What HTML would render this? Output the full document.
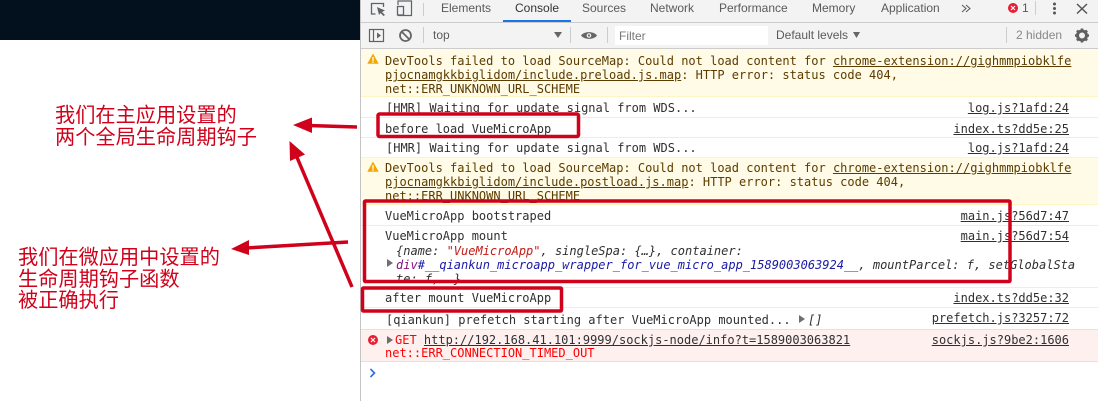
<!DOCTYPE html>
<html>
<head>
<meta charset="utf-8">
<style>
html,body{margin:0;padding:0;background:#fff}
#p{position:relative;width:1098px;height:401px;overflow:hidden;background:#fff}
.a{position:absolute}
.t{position:absolute;white-space:pre;font:12px/14px "DejaVu Sans Mono",monospace;color:#303030}
.w{color:#5c3c00}
.e{color:#f00}
.u{text-decoration:underline}
.s{position:absolute;white-space:pre;font:12px/14px "DejaVu Sans Mono",monospace;color:#303030;text-decoration:underline;right:29px}
.b{position:absolute;white-space:pre;font:12px/14px "Liberation Sans",sans-serif;color:#5a5a5a}
.i{font-style:italic}
.c{position:absolute;white-space:pre;font:20.2px/22px "Liberation Sans","Noto Sans CJK SC",sans-serif;color:#d0021b}
.l{position:absolute;left:361px;right:0;height:1px;background:#ececec}
</style>
</head>
<body>
<div id="p">
<div class="a" style="left:0;top:0;width:360px;height:40px;background:#03111f"></div>
<div class="a" style="left:360px;top:0;width:1px;height:401px;background:#c4c4c4"></div>

<div class="a" style="left:361px;top:0;right:0;height:22px;background:#f3f3f3"></div>
<div class="a" style="left:361px;top:22px;right:0;height:1px;background:#ccc"></div>
<div class="a" style="left:361px;top:23px;right:0;height:25px;background:#f3f3f3"></div>
<div class="a" style="left:361px;top:48px;right:0;height:1px;background:#ccc"></div>

<svg class="a" style="left:361px;top:0" width="737" height="48" viewBox="361 0 737 48" fill="none">
<path d="M375.500 14H371.500V3.500H383.500V7" stroke="#5f6368" stroke-width="1.300"/>
<path d="M377 7L385 10.500L382 12L385 15L383.500 16L380.500 13L379 15Z" fill="#5f6368"/>
<path d="M398 5V1H411.500V15.500H398" stroke="#5f6368" stroke-width="1.200"/>
<rect x="397.500" y="6.500" width="6" height="8.500" stroke="#5f6368" stroke-width="1.300"/>
<line x1="423.500" y1="3" x2="423.500" y2="16" stroke="#ccc"/>
<rect x="369.500" y="29.500" width="14" height="12" stroke="#5f6368" stroke-width="1.200"/>
<line x1="373.500" y1="29" x2="373.500" y2="42" stroke="#5f6368" stroke-width="1.200"/>
<path d="M377 32.500L381 35.500L377 38.500Z" fill="#5f6368"/>
<circle cx="405.500" cy="35.500" r="5.500" stroke="#666" stroke-width="1.800"/>
<line x1="401.500" y1="31.500" x2="409.500" y2="39.500" stroke="#666" stroke-width="1.800"/>
<line x1="423.500" y1="27" x2="423.500" y2="43" stroke="#ccc"/>
<line x1="570.500" y1="27" x2="570.500" y2="43" stroke="#ccc"/>
<line x1="607.500" y1="27" x2="607.500" y2="43" stroke="#ccc"/>
<line x1="1006.500" y1="27" x2="1006.500" y2="43" stroke="#ccc"/>
<path d="M554 32H562L558 38Z" fill="#666"/>
<path d="M581 35.500C584 31 594 31 597 35.500C594 40 584 40 581 35.500Z" fill="#666"/>
<circle cx="589" cy="35.500" r="2.300" fill="#f3f3f3"/>
<circle cx="589" cy="35.500" r="1.100" fill="#666"/>
<path d="M962 5L966 8.500L962 12M966 5L970 8.500L966 12" stroke="#555" stroke-width="1"/>
<circle cx="1013" cy="8" r="5" fill="#e81c33"/>
<path d="M1011 6L1015 10M1015 6L1011 10" stroke="#fff" stroke-width="1.200"/>
<line x1="1035.500" y1="1" x2="1035.500" y2="15" stroke="#ccc"/>
<circle cx="1054.500" cy="4" r="1.500" fill="#555"/>
<circle cx="1054.500" cy="8.500" r="1.500" fill="#555"/>
<circle cx="1054.500" cy="13" r="1.500" fill="#555"/>
<path d="M1077 4L1087 13.500M1087 4L1077 13.500" stroke="#555" stroke-width="1.500"/>
<circle cx="1082" cy="35.500" r="4.500" stroke="#606060" stroke-width="3"/>
<path d="M1082 28.500V31M1082 40V42.500M1075 35.500H1077.500M1086.500 35.500H1089M1077 30.500L1078.800 32.300M1085.200 38.700L1087 40.500M1087 30.500L1085.200 32.300M1078.800 38.700L1077 40.500" stroke="#606060" stroke-width="2.600"/>
</svg>

<div class="a" style="left:503px;top:20px;width:68px;height:2px;background:#1a73e8"></div>
<div class="b" style="left:441px;top:1px">Elements</div>
<div class="b" style="left:515px;top:1px;color:#333">Console</div>
<div class="b" style="left:582px;top:1px">Sources</div>
<div class="b" style="left:650px;top:1px">Network</div>
<div class="b" style="left:719px;top:1px">Performance</div>
<div class="b" style="left:812px;top:1px">Memory</div>
<div class="b" style="left:881px;top:1px">Application</div>
<div class="b" style="left:1022px;top:1px">1</div>
<div class="b" style="left:433px;top:28px">top</div>
<div class="a" style="left:615px;top:26px;width:153px;height:19px;background:#fff"></div>
<div class="b" style="left:619px;top:29px;color:#777">Filter</div>
<div class="b" style="left:776px;top:28px">Default levels</div>
<svg class="a" style="left:853px;top:32px" width="8" height="7"><path d="M0 0H7L3.500 6Z" fill="#666"/></svg>
<div class="b" style="left:1016px;top:28px;color:#888">2 hidden</div>

<!-- warning 1 -->
<div class="a" style="left:361px;top:49px;right:0;height:48px;background:#fffbe6;border-bottom:1px solid #fff5c2;box-sizing:border-box"></div>
<svg class="a" style="left:367px;top:53px" width="12" height="12"><path d="M6 .5L11.700 10.800H.3Z" fill="#f2a600"/><rect x="5.300" y="4" width="1.400" height="3.800" fill="#fff"/><rect x="5.300" y="8.400" width="1.400" height="1.400" fill="#fff"/></svg>
<div class="t w" style="left:385px;top:54px">DevTools failed to load SourceMap: Could not load content for <span class="u">chrome-extension://gighmmpiobklfe</span></div>
<div class="t w" style="left:385px;top:68px"><span class="u">pjocnamgkkbiglidom/include.preload.js.map</span>: HTTP error: status code 404,</div>
<div class="t w" style="left:385px;top:82px">net::ERR_UNKNOWN_URL_SCHEME</div>

<div class="t" style="left:386px;top:101px">[HMR] Waiting for update signal from WDS...</div>
<div class="s" style="top:101px">log.js?1afd:24</div>
<div class="l" style="top:117px"></div>
<div class="t" style="left:385px;top:122px">before load VueMicroApp</div>
<div class="s" style="top:122px">index.ts?dd5e:25</div>
<div class="l" style="top:137px"></div>
<div class="t" style="left:386px;top:141px">[HMR] Waiting for update signal from WDS...</div>
<div class="s" style="top:141px">log.js?1afd:24</div>

<!-- warning 2 -->
<div class="a" style="left:361px;top:157px;right:0;height:48px;background:#fffbe6;border-top:1px solid #fff5c2;border-bottom:1px solid #fff5c2;box-sizing:border-box"></div>
<svg class="a" style="left:367px;top:161px" width="12" height="12"><path d="M6 .5L11.700 10.800H.3Z" fill="#f2a600"/><rect x="5.300" y="4" width="1.400" height="3.800" fill="#fff"/><rect x="5.300" y="8.400" width="1.400" height="1.400" fill="#fff"/></svg>
<div class="t w" style="left:385px;top:161px">DevTools failed to load SourceMap: Could not load content for <span class="u">chrome-extension://gighmmpiobklfe</span></div>
<div class="t w" style="left:385px;top:175px"><span class="u">pjocnamgkkbiglidom/include.postload.js.map</span>: HTTP error: status code 404,</div>
<div class="t w" style="left:385px;top:189px">net::ERR_UNKNOWN_URL_SCHEME</div>

<div class="t" style="left:385px;top:209px">VueMicroApp bootstraped</div>
<div class="s" style="top:209px">main.js?56d7:47</div>
<div class="l" style="top:225px"></div>
<div class="t" style="left:385px;top:229px">VueMicroApp mount</div>
<div class="s" style="top:229px">main.js?56d7:54</div>
<div class="t i" style="left:396px;top:244px">{name: <span style="color:#c41a16">"VueMicroApp"</span>, singleSpa: {…}, container:</div>
<svg class="a" style="left:387px;top:259px" width="7" height="9"><path d="M0 0L6 4L0 8Z" fill="#6e6e6e"/></svg>
<div class="t i" style="left:396px;top:258px"><span style="color:#881280">div</span><span style="color:#1a1aa6">#__qiankun_microapp_wrapper_for_vue_micro_app_1589003063924__</span>, mountParcel: f, setGlobalSta</div>
<div class="t i" style="left:396px;top:272px">te: f, …}</div>
<div class="l" style="top:287px"></div>
<div class="t" style="left:385px;top:291px">after mount VueMicroApp</div>
<div class="s" style="top:291px">index.ts?dd5e:32</div>
<div class="l" style="top:307px"></div>
<div class="t" style="left:386px;top:313px">[qiankun] prefetch starting after VueMicroApp mounted... </div>
<svg class="a" style="left:799px;top:315px" width="7" height="9"><path d="M0 0L6 4L0 8Z" fill="#6e6e6e"/></svg>
<div class="t i" style="left:808px;top:313px">[]</div>
<div class="s" style="top:311px">prefetch.js?3257:72</div>

<!-- error -->
<div class="a" style="left:361px;top:329px;right:0;height:33px;background:#fff0f0;border-top:1px solid #ffd6d6;border-bottom:1px solid #ffd6d6;box-sizing:border-box"></div>
<svg class="a" style="left:367px;top:334px" width="12" height="12"><circle cx="6" cy="6" r="5" fill="#e81c33"/><path d="M4 4L8 8M8 4L4 8" stroke="#fff" stroke-width="1.200"/></svg>
<svg class="a" style="left:387px;top:336px" width="7" height="9"><path d="M0 0L6 4L0 8Z" fill="#6e6e6e"/></svg>
<div class="t e" style="left:395px;top:333px">GET <span class="u" style="color:#303030">http://192.168.41.101:9999/sockjs-node/info?t=1589003063821</span></div>
<div class="t e" style="left:385px;top:346px">net::ERR_CONNECTION_TIMED_OUT</div>
<div class="s" style="top:333px">sockjs.js?9be2:1606</div>

<svg class="a" style="left:369px;top:368px" width="8" height="10"><path d="M1.500 1L5.500 5L1.500 9" stroke="#2a6fe8" stroke-width="1.600" fill="none"/></svg>

<!-- annotations -->
<svg class="a" style="left:0;top:0" width="1098" height="401" fill="none">
<rect x="378" y="114" width="200.500" height="22.500" rx="1.500" stroke="#d0021b" stroke-width="3.500"/>
<rect x="364.500" y="201" width="645.500" height="80.500" rx="1" stroke="#d0021b" stroke-width="3.500"/>
<rect x="362.500" y="288" width="199" height="23" rx="1" stroke="#d0021b" stroke-width="3.500"/>
<path d="M357 127L308 125.500" stroke="#d0021b" stroke-width="3.500"/>
<path d="M293 125L312 117.500V133Z" fill="#d0021b"/>
<path d="M352 287L296 155" stroke="#d0021b" stroke-width="3.500"/>
<path d="M289.500 141L305 154.500L290 161Z" fill="#d0021b"/>
<path d="M348 242L246 248" stroke="#d0021b" stroke-width="3.500"/>
<path d="M231 249L249 240V255Z" fill="#d0021b"/>
</svg>
<div class="c" style="left:55px;top:105px">我们在主应用设置的</div>
<div class="c" style="left:55px;top:127px">两个全局生命周期钩子</div>
<div class="c" style="left:18px;top:247px">我们在微应用中设置的</div>
<div class="c" style="left:18px;top:269px">生命周期钩子函数</div>
<div class="c" style="left:18px;top:290px">被正确执行</div>
</div>
</body>
</html>
